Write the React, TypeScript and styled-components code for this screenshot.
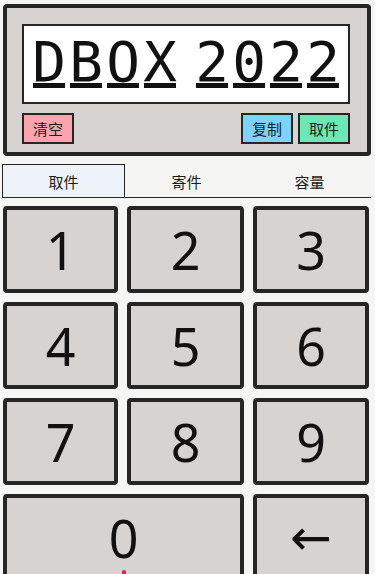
import React, { useState } from "react";
import styled, { createGlobalStyle } from "styled-components";

const GlobalStyle = createGlobalStyle`
  html, body {
    margin: 0;
    padding: 0;
    background: #f5f5f4;
    overflow: hidden;
  }
  body {
    font-family: "Noto Sans", "Noto Sans CJK SC", sans-serif;
    color: #1c1917;
  }
`;

const groups = [["D", "B", "O", "X"], ["2", "0", "2", "2"]];
const tabs = ["取件", "寄件", "容量"];
const keys = ["1", "2", "3", "4", "5", "6", "7", "8", "9"];

const App = () => {
    const [tab, setTab] = useState(0);

    return (
        <Page>
            <GlobalStyle />
            <Panel>
                <Display>
                    {groups.map((group, gi) => (
                        <Group key={gi}>
                            {group.map((ch, i) => (
                                <Cell key={i}>{ch}</Cell>
                            ))}
                        </Group>
                    ))}
                </Display>
                <Actions>
                    <ActionButton $bg="#fda4af">清空</ActionButton>
                    <Spacer />
                    <ActionButton $bg="#7dd3fc">复制</ActionButton>
                    <ActionButton $bg="#6ee7b7">取件</ActionButton>
                </Actions>
            </Panel>

            <Tabs>
                {tabs.map((t, i) => (
                    <Tab key={t} $active={i === tab} onClick={() => setTab(i)}>
                        {t}
                    </Tab>
                ))}
            </Tabs>

            <Keypad>
                {keys.map((k) => (
                    <Key key={k}>{k}</Key>
                ))}
                <Key $wide>
                    <span>0</span>
                    <Hint />
                </Key>
                <Key $arrow>←</Key>
            </Keypad>
        </Page>
    );
};

const Page = styled.div`
  width: 375px;
  padding: 4px 4px 0 3px;
  box-sizing: border-box;
`;

const Panel = styled.div`
  border: 4px solid #262626;
  border-radius: 4px;
  background: #d6d3d1;
  padding: 16px 17px 8px 15px;
`;

const Display = styled.div`
  height: 76px;
  border: 2px solid #262626;
  background: #fff;
  display: flex;
  justify-content: center;
  align-items: center;
  gap: 20px;
`;

const Group = styled.div`
  display: flex;
  gap: 5px;
`;

const Cell = styled.div`
  width: 32px;
  height: 42px;
  line-height: 42px;
  border-bottom: 5px solid #111;
  font-family: "DejaVu Sans Mono", monospace;
  font-size: 56px;
  color: #111;
  display: flex;
  justify-content: center;
`;

const Actions = styled.div`
  display: flex;
  gap: 5px;
  margin-top: 9px;
`;

const Spacer = styled.div`
  flex: 1;
`;

const ActionButton = styled.button<{ $bg: string }>`
  width: 52px;
  height: 31px;
  padding: 0;
  border: 2px solid #262626;
  background: ${(p) => p.$bg};
  font-family: "Noto Sans CJK SC", sans-serif;
  font-size: 15px;
  color: #1c1917;
  cursor: pointer;
`;

const Tabs = styled.div`
  display: grid;
  grid-template-columns: repeat(3, 1fr);
  margin: 8px 0 0 -1px;
  border-bottom: 1px solid #262626;
`;

const Tab = styled.div<{ $active: boolean }>`
  height: 33px;
  display: flex;
  align-items: center;
  justify-content: center;
  font-family: "Noto Sans CJK SC", sans-serif;
  font-size: 15px;
  color: #1c1917;
  box-sizing: border-box;
  border: 1px solid ${(p) => (p.$active ? "#262626" : "transparent")};
  border-bottom: none;
  background: ${(p) => (p.$active ? "#eef3fa" : "transparent")};
  cursor: pointer;
`;

const Keypad = styled.div`
  display: grid;
  grid-template-columns: 115px 117px 116px;
  grid-auto-rows: 87px;
  gap: 9px;
  margin-top: 8px;
`;

const Key = styled.button<{ $wide?: boolean; $arrow?: boolean }>`
  grid-column: ${(p) => (p.$wide ? "span 2" : "auto")};
  position: relative;
  border: 4px solid #262626;
  border-radius: 4px;
  background: #d6d3d1;
  padding: 0;
  display: flex;
  align-items: center;
  justify-content: center;
  font-family: ${(p) => (p.$arrow ? '"DejaVu Sans"' : '"Noto Sans"')}, sans-serif;
  font-size: ${(p) => (p.$arrow ? "50px" : "52px")};
  color: #111;
  line-height: 1;
  cursor: pointer;
`;

const Hint = styled.i`
  position: absolute;
  left: 115px;
  top: 72px;
  width: 4px;
  height: 6px;
  border-radius: 2px 2px 0 0;
  background: #e11d48;
`;

export default App;
